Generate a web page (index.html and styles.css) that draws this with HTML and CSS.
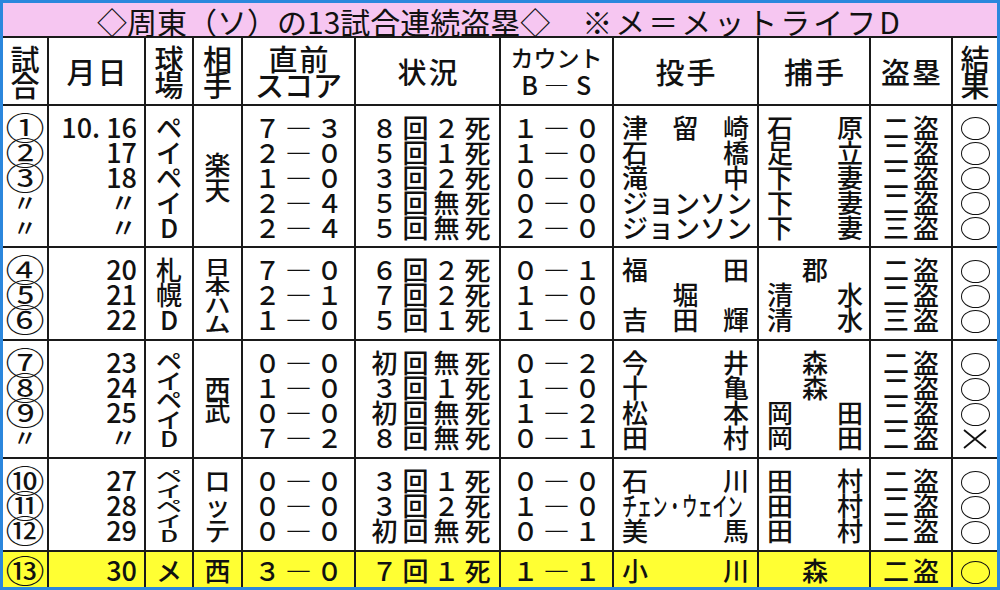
FILE: index.html
```html
<!DOCTYPE html>
<html lang="ja">
<head>
<meta charset="utf-8">
<link rel="stylesheet" href="styles.css">
</head>
<body>
<div class="sheet">
  <div class="title">◇周東（ソ）の13試合連続盗塁◇<span class="gap"></span><span class="note">※メ＝メットライフD</span></div>

  <!-- header -->
  <div class="h two"><div>試</div><div>合</div></div>
  <div class="h"><span class="wide">月日</span></div>
  <div class="h two"><div>球</div><div>場</div></div>
  <div class="h two"><div>相</div><div>手</div></div>
  <div class="h two"><div class="wide">直前</div><div>スコア</div></div>
  <div class="h"><span class="wide">状況</span></div>
  <div class="h small"><div>カウント</div><div class="bs"><span>B</span><span>―</span><span>S</span></div></div>
  <div class="h"><span class="wide">投手</span></div>
  <div class="h"><span class="wide">捕手</span></div>
  <div class="h"><span class="wide">盗塁</span></div>
  <div class="h two"><div>結</div><div>果</div></div>

  <!-- group 1 -->
  <div class="c no"><div class="l"><span class="cn">①</span></div><div class="l"><span class="cn">②</span></div><div class="l"><span class="cn">③</span></div><div class="l ditto">〃</div><div class="l ditto">〃</div></div>
  <div class="c date"><div class="l">10. 16</div><div class="l">17</div><div class="l">18</div><div class="l">〃</div><div class="l">〃</div></div>
  <div class="c mid"><div class="l">ペ</div><div class="l">イ</div><div class="l">ペ</div><div class="l">イ</div><div class="l">D</div></div>
  <div class="c mid"><div class="l">楽</div><div class="l">天</div></div>
  <div class="c mid">
    <div class="l t3"><span>７</span><span>―</span><span>３</span></div>
    <div class="l t3"><span>２</span><span>―</span><span>０</span></div>
    <div class="l t3"><span>１</span><span>―</span><span>０</span></div>
    <div class="l t3"><span>２</span><span>―</span><span>４</span></div>
    <div class="l t3"><span>２</span><span>―</span><span>４</span></div>
  </div>
  <div class="c sit">
    <div class="l t4"><span>８</span><span>回</span><span>２</span><span>死</span></div>
    <div class="l t4"><span>５</span><span>回</span><span>１</span><span>死</span></div>
    <div class="l t4"><span>３</span><span>回</span><span>２</span><span>死</span></div>
    <div class="l t4"><span>５</span><span>回</span><span>無</span><span>死</span></div>
    <div class="l t4"><span>５</span><span>回</span><span>無</span><span>死</span></div>
  </div>
  <div class="c mid">
    <div class="l t3"><span>１</span><span>―</span><span>０</span></div>
    <div class="l t3"><span>１</span><span>―</span><span>０</span></div>
    <div class="l t3"><span>０</span><span>―</span><span>０</span></div>
    <div class="l t3"><span>０</span><span>―</span><span>０</span></div>
    <div class="l t3"><span>２</span><span>―</span><span>０</span></div>
  </div>
  <div class="c pit">
    <div class="l nm"><span>津</span><span>留</span><span>崎</span></div>
    <div class="l nm"><span>石</span><span>橋</span></div>
    <div class="l nm"><span>滝</span><span>中</span></div>
    <div class="l nm"><span>ジ</span><span>ョ</span><span>ン</span><span>ソ</span><span>ン</span></div>
    <div class="l nm"><span>ジ</span><span>ョ</span><span>ン</span><span>ソ</span><span>ン</span></div>
  </div>
  <div class="c cat">
    <div class="l nm"><span>石</span><span>原</span></div>
    <div class="l nm"><span>足</span><span>立</span></div>
    <div class="l nm"><span>下</span><span>妻</span></div>
    <div class="l nm"><span>下</span><span>妻</span></div>
    <div class="l nm"><span>下</span><span>妻</span></div>
  </div>
  <div class="c mid steal"><div class="l">二盗</div><div class="l">二盗</div><div class="l">二盗</div><div class="l">二盗</div><div class="l">三盗</div></div>
  <div class="c mid"><div class="l"><i class="o"></i></div><div class="l"><i class="o"></i></div><div class="l"><i class="o"></i></div><div class="l"><i class="o"></i></div><div class="l"><i class="o"></i></div></div>

  <!-- group 2 -->
  <div class="c no"><div class="l"><span class="cn">④</span></div><div class="l"><span class="cn">⑤</span></div><div class="l"><span class="cn">⑥</span></div></div>
  <div class="c date"><div class="l">20</div><div class="l">21</div><div class="l">22</div></div>
  <div class="c mid"><div class="l">札</div><div class="l">幌</div><div class="l">D</div></div>
  <div class="c mid sq19"><div class="l">日</div><div class="l">本</div><div class="l">ハ</div><div class="l">ム</div></div>
  <div class="c mid">
    <div class="l t3"><span>７</span><span>―</span><span>０</span></div>
    <div class="l t3"><span>２</span><span>―</span><span>１</span></div>
    <div class="l t3"><span>１</span><span>―</span><span>０</span></div>
  </div>
  <div class="c sit">
    <div class="l t4"><span>６</span><span>回</span><span>２</span><span>死</span></div>
    <div class="l t4"><span>７</span><span>回</span><span>２</span><span>死</span></div>
    <div class="l t4"><span>５</span><span>回</span><span>１</span><span>死</span></div>
  </div>
  <div class="c mid">
    <div class="l t3"><span>０</span><span>―</span><span>１</span></div>
    <div class="l t3"><span>１</span><span>―</span><span>０</span></div>
    <div class="l t3"><span>１</span><span>―</span><span>０</span></div>
  </div>
  <div class="c pit">
    <div class="l nm"><span>福</span><span>田</span></div>
    <div class="l nm ctr"><span>堀</span></div>
    <div class="l nm"><span>吉</span><span>田</span><span>輝</span></div>
  </div>
  <div class="c cat">
    <div class="l nm ctr"><span>郡</span></div>
    <div class="l nm"><span>清</span><span>水</span></div>
    <div class="l nm"><span>清</span><span>水</span></div>
  </div>
  <div class="c mid steal"><div class="l">二盗</div><div class="l">二盗</div><div class="l">三盗</div></div>
  <div class="c mid"><div class="l"><i class="o"></i></div><div class="l"><i class="o"></i></div><div class="l"><i class="o"></i></div></div>

  <!-- group 3 -->
  <div class="c no"><div class="l"><span class="cn">⑦</span></div><div class="l"><span class="cn">⑧</span></div><div class="l"><span class="cn">⑨</span></div><div class="l ditto">〃</div></div>
  <div class="c date"><div class="l">23</div><div class="l">24</div><div class="l">25</div><div class="l">〃</div></div>
  <div class="c mid sq20"><div class="l">ペ</div><div class="l">イ</div><div class="l">ペ</div><div class="l">イ</div><div class="l">D</div></div>
  <div class="c mid sq23"><div class="l">西</div><div class="l">武</div></div>
  <div class="c mid">
    <div class="l t3"><span>０</span><span>―</span><span>０</span></div>
    <div class="l t3"><span>１</span><span>―</span><span>０</span></div>
    <div class="l t3"><span>０</span><span>―</span><span>０</span></div>
    <div class="l t3"><span>７</span><span>―</span><span>２</span></div>
  </div>
  <div class="c sit">
    <div class="l t4"><span>初</span><span>回</span><span>無</span><span>死</span></div>
    <div class="l t4"><span>３</span><span>回</span><span>１</span><span>死</span></div>
    <div class="l t4"><span>初</span><span>回</span><span>無</span><span>死</span></div>
    <div class="l t4"><span>８</span><span>回</span><span>無</span><span>死</span></div>
  </div>
  <div class="c mid">
    <div class="l t3"><span>０</span><span>―</span><span>２</span></div>
    <div class="l t3"><span>１</span><span>―</span><span>０</span></div>
    <div class="l t3"><span>１</span><span>―</span><span>２</span></div>
    <div class="l t3"><span>０</span><span>―</span><span>１</span></div>
  </div>
  <div class="c pit">
    <div class="l nm"><span>今</span><span>井</span></div>
    <div class="l nm"><span>十</span><span>亀</span></div>
    <div class="l nm"><span>松</span><span>本</span></div>
    <div class="l nm"><span>田</span><span>村</span></div>
  </div>
  <div class="c cat">
    <div class="l nm ctr"><span>森</span></div>
    <div class="l nm ctr"><span>森</span></div>
    <div class="l nm"><span>岡</span><span>田</span></div>
    <div class="l nm"><span>岡</span><span>田</span></div>
  </div>
  <div class="c mid steal"><div class="l">二盗</div><div class="l">二盗</div><div class="l">二盗</div><div class="l">二盗</div></div>
  <div class="c mid">
    <div class="l"><i class="o"></i></div><div class="l"><i class="o"></i></div><div class="l"><i class="o"></i></div>
    <div class="l"><svg class="x" width="24" height="20" viewBox="0 0 24 20"><path d="M1 1 L23 19 M23 1 L1 19" stroke="#111" stroke-width="1.8" fill="none"/></svg></div>
  </div>

  <!-- group 4 -->
  <div class="c no"><div class="l"><span class="cn">⑩</span></div><div class="l"><span class="cn">⑪</span></div><div class="l"><span class="cn">⑫</span></div></div>
  <div class="c date"><div class="l">27</div><div class="l">28</div><div class="l">29</div></div>
  <div class="c mid sq15"><div class="l">ペ</div><div class="l">イ</div><div class="l">ペ</div><div class="l">イ</div><div class="l">D</div></div>
  <div class="c mid"><div class="l">ロ</div><div class="l">ッ</div><div class="l">テ</div></div>
  <div class="c mid">
    <div class="l t3"><span>０</span><span>―</span><span>０</span></div>
    <div class="l t3"><span>０</span><span>―</span><span>０</span></div>
    <div class="l t3"><span>０</span><span>―</span><span>０</span></div>
  </div>
  <div class="c sit">
    <div class="l t4"><span>３</span><span>回</span><span>１</span><span>死</span></div>
    <div class="l t4"><span>３</span><span>回</span><span>２</span><span>死</span></div>
    <div class="l t4"><span>初</span><span>回</span><span>無</span><span>死</span></div>
  </div>
  <div class="c mid">
    <div class="l t3"><span>０</span><span>―</span><span>０</span></div>
    <div class="l t3"><span>１</span><span>―</span><span>０</span></div>
    <div class="l t3"><span>０</span><span>―</span><span>１</span></div>
  </div>
  <div class="c pit">
    <div class="l nm"><span>石</span><span>川</span></div>
    <div class="l nm"><span class="cond">チェン・ウェイン</span></div>
    <div class="l nm"><span>美</span><span>馬</span></div>
  </div>
  <div class="c cat">
    <div class="l nm"><span>田</span><span>村</span></div>
    <div class="l nm"><span>田</span><span>村</span></div>
    <div class="l nm"><span>田</span><span>村</span></div>
  </div>
  <div class="c mid steal"><div class="l">二盗</div><div class="l">二盗</div><div class="l">二盗</div></div>
  <div class="c mid"><div class="l"><i class="o"></i></div><div class="l"><i class="o"></i></div><div class="l"><i class="o"></i></div></div>

  <!-- row 13 -->
  <div class="c no y"><div class="l"><span class="cn">⑬</span></div></div>
  <div class="c date y"><div class="l">30</div></div>
  <div class="c mid y"><div class="l">メ</div></div>
  <div class="c mid y"><div class="l">西</div></div>
  <div class="c mid y"><div class="l t3"><span>３</span><span>―</span><span>０</span></div></div>
  <div class="c sit y"><div class="l t4"><span>７</span><span>回</span><span>１</span><span>死</span></div></div>
  <div class="c mid y"><div class="l t3"><span>１</span><span>―</span><span>１</span></div></div>
  <div class="c pit y"><div class="l nm"><span>小</span><span>川</span></div></div>
  <div class="c cat y"><div class="l nm ctr"><span>森</span></div></div>
  <div class="c mid steal y"><div class="l">二盗</div></div>
  <div class="c mid y"><div class="l"><i class="o"></i></div></div>
</div>
</body>
</html>
```
FILE: styles.css
```css
html, body {
  margin: 0;
  padding: 0;
}
body {
  width: 1000px;
  height: 590px;
  background: #2b87dd;
  font-family: "Noto Sans CJK JP", "Noto Sans", sans-serif;
  color: #111;
  overflow: hidden;
}
.sheet {
  margin: 3px;
  width: 994px;
  height: 584px;
  background: #1a1a1a;
  display: grid;
  grid-template-columns: 44px 95px 46px 47px 111px 143px 111px 143px 110px 80px 44px;
  grid-template-rows: 33px 66px 140px 91px 116px 91px 35px;
  column-gap: 2px;
  row-gap: 2px;
}
.title {
  grid-column: 1 / -1;
  background: #f6c6f1;
  font-size: 30px;
  line-height: 33px;
  padding-top: 2px;
  text-align: center;
  white-space: nowrap;
  font-weight: 400;
}
.title .gap {
  display: inline-block;
  width: 32px;
}
.title .note {
  letter-spacing: 3px;
}

/* header */
.h {
  background: #fff;
  display: flex;
  flex-direction: column;
  align-items: center;
  justify-content: center;
  font-size: 29px;
  font-weight: 500;
  line-height: 30px;
  white-space: nowrap;
}
.h.two {
  line-height: 26px;
}
.h .wide {
  letter-spacing: 2px;
  padding-left: 2px;
}
.h.small {
  font-size: 23px;
  line-height: 27px;
}
.h .bs {
  display: flex;
  font-size: 25px;
}
.h .bs span {
  width: 27px;
  text-align: center;
}

/* body cells */
.c {
  background: #fff;
  display: flex;
  flex-direction: column;
  justify-content: center;
  font-size: 26px;
  font-weight: 500;
  white-space: nowrap;
}
.c.y {
  background: #ffff33;
}
.l {
  height: 25px;
  line-height: 25px;
}
.no {
  align-items: center;
  font-size: 27px;
}
.no .cn {
  display: inline-block;
  font-size: 34px;
  line-height: 25px;
  font-weight: 400;
  transform: scale(1.15, 0.95);
}
.no .ditto {
  font-size: 24px;
}
.date {
  align-items: flex-end;
  padding-right: 7px;
  font-size: 27px;
}
.mid {
  align-items: center;
}
.t3 {
  display: flex;
}
.t3 span {
  width: 31px;
  text-align: center;
}
.sit {
  align-items: flex-end;
  padding-right: 6px;
}
.t4 {
  display: flex;
}
.t4 span {
  width: 31px;
  text-align: center;
}
.pit {
  padding: 0 8px 0 8px;
}
.cat {
  padding: 0 6px 0 8px;
}
.nm {
  display: flex;
  justify-content: space-between;
}
.nm.ctr {
  justify-content: center;
}
.cond {
  display: inline-block;
  transform: scaleX(0.58);
  transform-origin: left center;
}
.steal .l {
  letter-spacing: 4px;
  padding-left: 4px;
}
.o {
  display: inline-block;
  width: 27px;
  height: 21px;
  border: 1.5px solid #111;
  border-radius: 50%;
  vertical-align: middle;
  margin-top: -3px;
}
.x {
  vertical-align: middle;
  margin-top: -3px;
}

/* squeezed vertical stacks */
.sq20 .l {
  height: 19.5px;
  line-height: 19.5px;
  transform: scaleY(0.82);
}
.sq15 .l {
  height: 15px;
  line-height: 15px;
  transform: scaleY(0.62);
}
.sq19 .l {
  height: 19px;
  line-height: 19px;
  transform: scaleY(0.8);
}
.sq23 .l {
  height: 22px;
  line-height: 22px;
}
```
